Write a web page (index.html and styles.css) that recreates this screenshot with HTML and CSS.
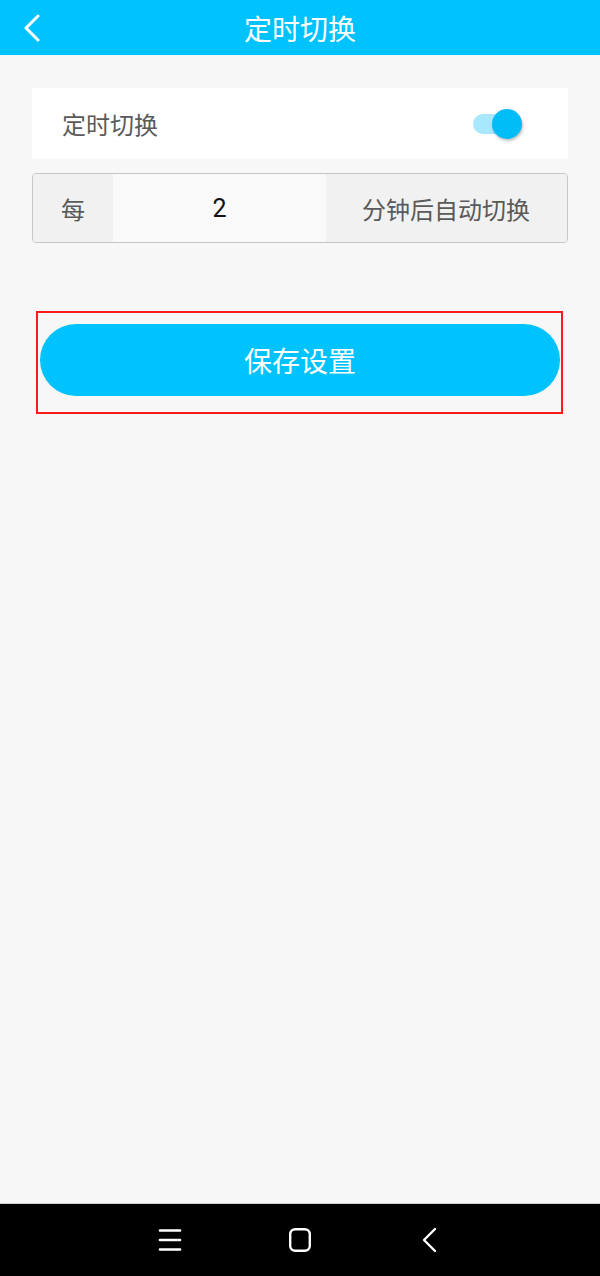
FILE: index.html
```html
<!DOCTYPE html>
<html lang="zh-CN">
<head>
<meta charset="utf-8">
<title>定时切换</title>
<link rel="stylesheet" href="styles.css">
</head>
<body>
<div class="screen">
  <header class="topbar">
    <div class="back">
      <svg width="20" height="28" viewBox="0 0 20 28"><polyline points="15,2 3,14 15,26" fill="none" stroke="#fff" stroke-width="3" stroke-linecap="round" stroke-linejoin="round"/></svg>
    </div>
    <h1 class="title">定时切换</h1>
    <div class="spacer"></div>
  </header>

  <main class="content">
    <div class="card switch-row">
      <span class="label">定时切换</span>
      <div class="toggle">
        <span class="track"></span>
        <span class="knob"></span>
      </div>
    </div>

    <div class="input-group">
      <span class="addon addon-left">每</span>
      <span class="field">2</span>
      <span class="addon addon-right">分钟后自动切换</span>
    </div>

    <div class="save-wrap">
      <button class="save">保存设置</button>
    </div>
  </main>

  <nav class="navbar">
    <span class="nav-item">
      <svg width="24" height="24" viewBox="0 0 24 24"><g stroke="#fff" stroke-width="2.6" stroke-linecap="round"><line x1="2" y1="2.5" x2="22" y2="2.5"/><line x1="2" y1="12" x2="22" y2="12"/><line x1="2" y1="21.5" x2="22" y2="21.5"/></g></svg>
    </span>
    <span class="nav-item">
      <svg width="24" height="26" viewBox="0 0 24 26"><rect x="2.2" y="2.2" width="19.6" height="21.6" rx="5" ry="5" fill="none" stroke="#fff" stroke-width="2.4"/></svg>
    </span>
    <span class="nav-item">
      <svg width="18" height="26" viewBox="0 0 18 26"><polyline points="14,2 3,13 14,24" fill="none" stroke="#fff" stroke-width="2.4" stroke-linecap="round" stroke-linejoin="round"/></svg>
    </span>
  </nav>
</div>
</body>
</html>
```

FILE: styles.css
```css
html, body {
  margin: 0;
  padding: 0;
}

body {
  background: #f7f7f7;
  font-family: "Noto Sans CJK SC", "Noto Sans", Roboto, sans-serif;
}

.screen {
  width: 600px;
  height: 1276px;
  display: flex;
  flex-direction: column;
  background: #f7f7f7;
}

.topbar {
  height: 55px;
  flex: 0 0 55px;
  background: #00c2fc;
  border-bottom: 1px solid #eef9fd;
  display: grid;
  grid-template-columns: 1fr auto 1fr;
  align-items: center;
}

.back {
  padding-left: 23px;
  display: flex;
  align-items: center;
}

.back svg {
  display: block;
}

.title {
  margin: 0;
  color: #fff;
  font-size: 28px;
  font-weight: 400;
  line-height: 1;
  letter-spacing: 0;
}

.content {
  flex: 1;
  padding: 32px 32px 0 32px;
}

.card {
  background: #fff;
}

.switch-row {
  height: 71px;
  display: flex;
  align-items: center;
  justify-content: space-between;
  padding: 0 46px 0 30px;
  box-sizing: border-box;
}

.label {
  font-size: 24px;
  color: #5a5a5a;
  line-height: 1;
}

.toggle {
  position: relative;
  width: 49px;
  height: 30px;
}

.track {
  position: absolute;
  left: 0;
  top: 5px;
  width: 42px;
  height: 20px;
  border-radius: 10px;
  background: #a8e8fc;
}

.knob {
  position: absolute;
  left: 19px;
  top: 0;
  width: 30px;
  height: 30px;
  border-radius: 50%;
  background: #00bdf7;
  box-shadow: 1px 2px 3px rgba(0, 0, 0, 0.25);
}

.input-group {
  margin-top: 14px;
  height: 70px;
  box-sizing: border-box;
  border: 1px solid #c6c6c6;
  border-radius: 4px;
  overflow: hidden;
  display: flex;
  align-items: stretch;
}

.addon {
  display: flex;
  align-items: center;
  background: #f1f1f1;
  font-size: 24px;
  color: #5a5a5a;
}

.addon-left {
  width: 80px;
  justify-content: center;
}

.addon-right {
  width: 241px;
  padding-left: 36px;
  box-sizing: border-box;
}

.field {
  flex: 1;
  background: #f9f9f9;
  display: flex;
  align-items: center;
  justify-content: center;
  font-family: Roboto, "Noto Sans", sans-serif;
  font-size: 25px;
  color: #111;
}

.save-wrap {
  margin: 68px 5px 0 4px;
  border: 2px solid #ff1a1a;
  padding: 11px 1px 16px 2px;
}

.save {
  display: block;
  width: 100%;
  height: 72px;
  border: none;
  border-radius: 36px;
  background: #00c2fc;
  color: #fff;
  font-family: "Noto Sans CJK SC", "Noto Sans", sans-serif;
  font-size: 28px;
  font-weight: 400;
  letter-spacing: 0;
  padding: 0;
}

.navbar {
  flex: 0 0 72px;
  height: 72px;
  background: #000;
  border-top: 1px solid #cfcfcf;
  display: grid;
  grid-template-columns: 130px 130px 130px;
  justify-content: center;
  align-items: center;
}

.nav-item {
  display: flex;
  justify-content: center;
  align-items: center;
}

.nav-item svg {
  display: block;
}
```
